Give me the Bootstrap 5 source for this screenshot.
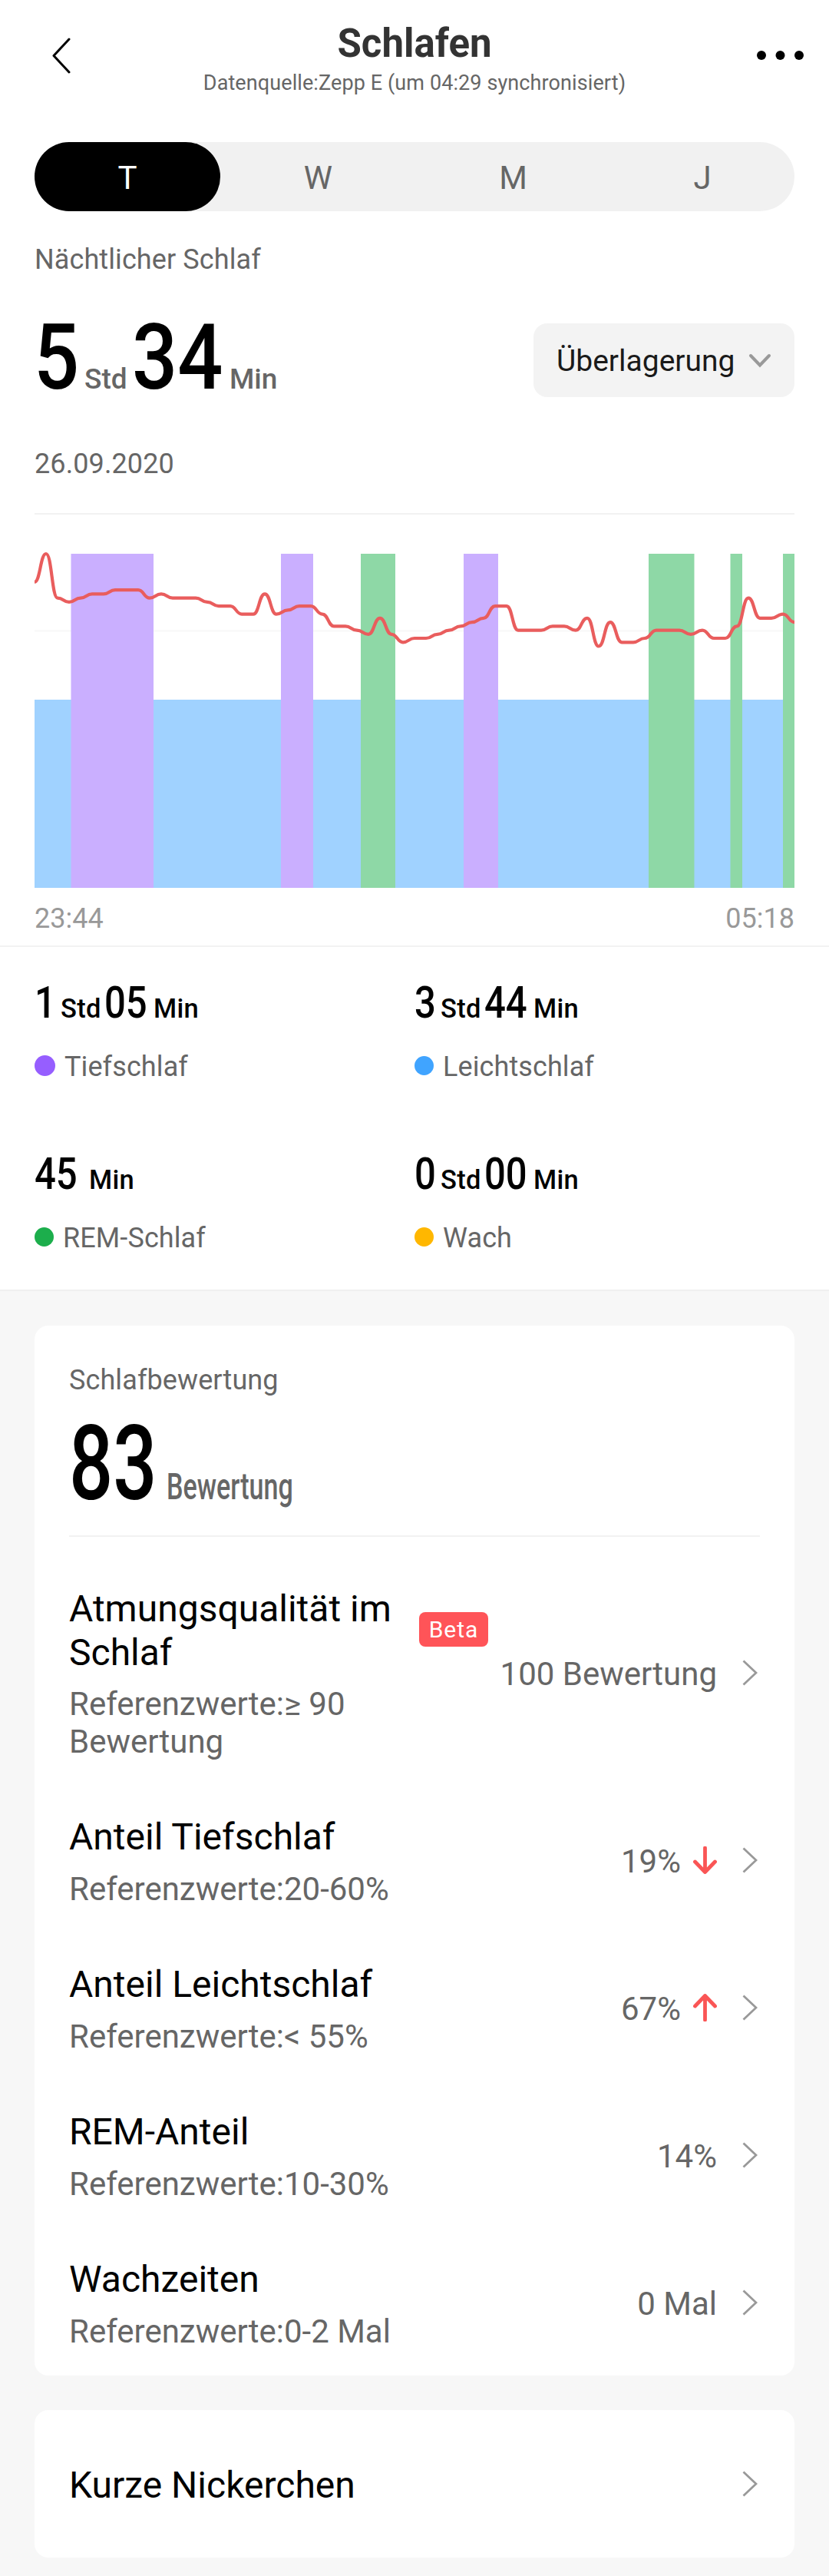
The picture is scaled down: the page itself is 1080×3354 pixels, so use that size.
<!DOCTYPE html>
<html lang="de">
<head>
  <meta charset="UTF-8">
  <meta name="viewport" content="width=device-width, initial-scale=1.0">
  <title>Schlafen</title>
  <link href="https://cdn.jsdelivr.net/npm/bootstrap@5.3.2/dist/css/bootstrap.min.css" rel="stylesheet">
  <style>
    body {
      font-family: Roboto, "Liberation Sans", sans-serif;
      background-color: #f7f7f7;
      color: #000;
      font-size: 36px;
      line-height: 42px;
    }

    svg {
      display: block;
      flex-shrink: 0;
    }

    .grey-text {
      color: #666;
      letter-spacing: .1px;
    }

    .side-pad {
      padding-left: 45px;
      padding-right: 45px;
    }

    /* header */
    .top-bar {
      height: 185px;
      padding: 27px 33px 0;
    }

    .top-bar svg {
      margin-top: 22px;
    }

    .top-title {
      font-size: 51px;
      line-height: 60px;
      font-weight: 700;
      color: #333;
      margin: 0 0 1px;
    }

    .top-source {
      font-size: 27px;
      line-height: 40px;
    }

    /* day / week / month / year */
    .period-tabs {
      display: grid;
      grid-template-columns: 242px 255px 253px 240px;
      height: 90px;
      border-radius: 45px;
      background-color: #f1f1f1;
      font-size: 42px;
      line-height: 90px;
      text-align: center;
    }

    .period-tabs a {
      color: #666;
      text-decoration: none;
      padding-top: 2px;
      height: 90px;
      border-radius: 45px;
    }

    .period-tabs a.current {
      background-color: #000;
      color: #fff;
    }

    /* narrow numerals */
    .narrow {
      display: inline-block;
      white-space: nowrap;
      font-weight: 500;
      transform-origin: left;
      transform: scaleX(.86);
    }

    .night-label {
      margin-top: 42px;
    }

    .night-total {
      margin-top: 62px;
      height: 96px;
    }

    .night-total .narrow {
      font-size: 119px;
      line-height: 90px;
      margin-left: -1px;
      transform: scaleX(.875);
    }

    .night-total .unit {
      font-size: 37px;
      font-weight: 500;
      color: #666;
    }

    .overlay-btn {
      width: 340px;
      height: 96px;
      border: 0;
      border-radius: 18px;
      background-color: #f3f3f3;
      font-size: 39px;
      line-height: 96px;
      color: #1a1a1a;
      padding: 2px 30px 0;
    }

    .night-date {
      margin-top: 66px;
      padding-bottom: 43px;
      border-bottom: 2px solid #f2f2f2;
    }

    .time-axis {
      color: #999;
      margin-top: 15px;
      padding-bottom: 14px;
      border-bottom: 2px solid #f2f2f2;
    }

    /* sleep phases */
    .phases {
      border-bottom: 2px solid #f0f0f0;
    }

    .phase {
      height: 223px;
      padding: 43px 0 0;
    }

    .phase .narrow {
      font-size: 57px;
      line-height: 60px;
    }

    .phase .unit {
      font-size: 34.5px;
      font-weight: 500;
      letter-spacing: .3px;
    }

    .phase-name {
      margin-top: 32px;
      gap: 12px;
    }

    .dot {
      width: 25px;
      height: 25px;
      border-radius: 50%;
      margin-bottom: 4px;
    }

    .dot-deep {
      width: 27px;
      height: 27px;
      background-color: #965eff;
    }

    .dot-light { background-color: #40a4ff; }
    .dot-rem { background-color: #1cae4c; }
    .dot-awake { background-color: #ffb700; }

    /* cards */
    .panel {
      background-color: #fff;
      border-radius: 18px;
      margin: 45px 45px 0;
    }

    .score-head {
      padding-top: 50px;
      margin-bottom: 28px;
      border-bottom: 2px solid #f2f2f2;
    }

    .score-value {
      margin-top: 18px;
      height: 163px;
    }

    .score-value .narrow {
      font-size: 136px;
      line-height: 140px;
      width: 127px;
      transform: scaleX(.74);
    }

    .score-value .score-unit {
      font-size: 48px;
      width: 170px;
      transform: scaleX(.71);
      color: #666;
    }

    .metric {
      min-height: 192px;
      padding: 38px 3px 33px 0;
    }

    .metric-title {
      font-size: 48px;
      line-height: 56.5px;
      max-width: 456px;
    }

    .metric-wrap .metric-title {
      width: 456px;
      flex-shrink: 0;
    }

    .metric-ref {
      margin-top: 14px;
      font-size: 42px;
      line-height: 49.2px;
      color: #666;
      max-width: 440px;
    }

    .metric-value {
      font-size: 42px;
      line-height: 49px;
      color: #666;
      padding-top: 3px;
      white-space: nowrap;
    }

    .metric-end {
      gap: 33px;
      padding-bottom: 4px;
    }

    .beta-tag {
      background-color: #ff5458;
      color: #fff;
      font-size: 30px;
      line-height: 45px;
      width: 90px;
      height: 45px;
      border-radius: 8px;
      text-align: center;
      letter-spacing: 1px;
      margin-bottom: 4px;
    }

    .naps {
      height: 192px;
      padding: 0 48px 0 45px;
    }

    .naps .metric-title {
      padding-top: 4px;
    }
  </style>
</head>
<body>

  <svg class="d-none">
    <symbol id="chevron" viewBox="0 0 20 34">
      <path d="M1.5 1.5 L18 17 L1.5 32.5" fill="none" stroke="#999" stroke-width="2.8"/>
    </symbol>
    <symbol id="arrow" viewBox="0 0 31 36">
      <path d="M15.5 2 V33 M2.500 20 L15.500 33.500 L28.500 20" fill="none" stroke="#fa5555" stroke-width="4.8" stroke-linecap="round" stroke-linejoin="round"/>
    </symbol>
  </svg>

  <main class="bg-white">
    <header class="top-bar d-flex justify-content-between align-items-start">
      <svg width="62" height="48" viewBox="0 0 62 48"><path d="M57 2 L37 23.500 L57 45" fill="none" stroke="#000" stroke-width="3" stroke-linecap="round" stroke-linejoin="round"/></svg>
      <div class="text-center">
        <h1 class="top-title">Schlafen</h1>
        <div class="top-source grey-text">Datenquelle:Zepp E (um 04:29 synchronisiert)</div>
      </div>
      <svg width="62" height="48" viewBox="0 0 62 48"><circle cx="7" cy="23" r="6"/><circle cx="31.500" cy="23" r="6"/><circle cx="56" cy="23" r="6"/></svg>
    </header>

    <div class="side-pad">
      <nav class="period-tabs">
        <a href="#" class="current">T</a>
        <a href="#">W</a>
        <a href="#">M</a>
        <a href="#">J</a>
      </nav>

      <div class="night-label grey-text">Nächtlicher Schlaf</div>

      <div class="night-total d-flex justify-content-between align-items-start">
        <div class="d-flex align-items-baseline">
          <span class="narrow" style="width: 66px">5</span>
          <span class="unit" style="width: 63px">Std</span>
          <span class="narrow" style="width: 127px">34</span>
          <span class="unit">Min</span>
        </div>
        <button class="overlay-btn d-flex justify-content-between align-items-center">
          <span>Überlagerung</span>
          <svg width="30" height="20" viewBox="0 0 30 20"><path d="M3 3 L15 15.500 L27 3" fill="none" stroke="#999" stroke-width="4" stroke-linecap="round"/></svg>
        </button>
      </div>

      <div class="night-date grey-text">26.09.2020</div>

      <svg id="sleepChart" width="990" height="490" viewBox="0 0 990 490">
        <path d="M0 151.500 H990" stroke="#f8f8f8" stroke-width="2"/>
        <rect x="0" y="241" width="990" height="245" fill="#a0d2ff"/>
        <g fill="#caafff">
          <rect x="47.500" y="51" width="107.500" height="435"/>
          <rect x="321" y="51" width="42" height="435"/>
          <rect x="559" y="51" width="45" height="435"/>
        </g>
        <g fill="#8ed8a6">
          <rect x="425" y="51" width="45" height="435"/>
          <rect x="800" y="51" width="59.500" height="435"/>
          <rect x="906.500" y="51" width="15.500" height="435"/>
          <rect x="975" y="51" width="15" height="435"/>
        </g>
        <path id="pulseLine" fill="none" stroke="#e95d5d" stroke-width="4.2"/>
      </svg>
    </div>

    <div class="time-axis side-pad d-flex justify-content-between">
      <span>23:44</span>
      <span>05:18</span>
    </div>

    <section class="phases side-pad">
      <div class="row g-0">
        <div class="col-6 phase">
          <div class="d-flex align-items-baseline">
            <span class="narrow" style="width: 34px">1</span>
            <span class="unit" style="width: 57px">Std</span>
            <span class="narrow" style="width: 64px">05</span>
            <span class="unit">Min</span>
          </div>
          <div class="phase-name d-flex align-items-center grey-text"><span class="dot dot-deep"></span>Tiefschlaf</div>
        </div>
        <div class="col-6 phase">
          <div class="d-flex align-items-baseline">
            <span class="narrow" style="width: 34px">3</span>
            <span class="unit" style="width: 57px">Std</span>
            <span class="narrow" style="width: 64px">44</span>
            <span class="unit">Min</span>
          </div>
          <div class="phase-name d-flex align-items-center grey-text"><span class="dot dot-light"></span>Leichtschlaf</div>
        </div>
        <div class="col-6 phase">
          <div class="d-flex align-items-baseline">
            <span class="narrow" style="width: 71px">45</span>
            <span class="unit">Min</span>
          </div>
          <div class="phase-name d-flex align-items-center grey-text"><span class="dot dot-rem"></span>REM-Schlaf</div>
        </div>
        <div class="col-6 phase">
          <div class="d-flex align-items-baseline">
            <span class="narrow" style="width: 34px">0</span>
            <span class="unit" style="width: 57px">Std</span>
            <span class="narrow" style="width: 64px">00</span>
            <span class="unit">Min</span>
          </div>
          <div class="phase-name d-flex align-items-center grey-text"><span class="dot dot-awake"></span>Wach</div>
        </div>
      </div>
    </section>
  </main>

  <section class="panel side-pad">
    <div class="score-head">
      <div class="grey-text">Schlafbewertung</div>
      <div class="score-value d-flex align-items-baseline">
        <span class="narrow">83</span>
        <span class="narrow score-unit">Bewertung</span>
      </div>
    </div>

    <div class="metric d-flex justify-content-between align-items-center">
      <div>
        <div class="metric-wrap d-flex align-items-center">
          <div class="metric-title">Atmungsqualität im Schlaf</div>
          <span class="beta-tag">Beta</span>
        </div>
        <div class="metric-ref">Referenzwerte:≥ 90 Bewertung</div>
      </div>
      <div class="metric-end d-flex align-items-center">
        <span class="metric-value">100 Bewertung</span>
        <svg width="20" height="34"><use href="#chevron"/></svg>
      </div>
    </div>

    <div class="metric d-flex justify-content-between align-items-center">
      <div>
        <div class="metric-title">Anteil Tiefschlaf</div>
        <div class="metric-ref">Referenzwerte:20-60%</div>
      </div>
      <div class="metric-end d-flex align-items-center">
        <div class="d-flex align-items-center gap-3">
          <span class="metric-value">19%</span>
          <svg width="31" height="36"><use href="#arrow"/></svg>
        </div>
        <svg width="20" height="34"><use href="#chevron"/></svg>
      </div>
    </div>

    <div class="metric d-flex justify-content-between align-items-center">
      <div>
        <div class="metric-title">Anteil Leichtschlaf</div>
        <div class="metric-ref">Referenzwerte:&lt; 55%</div>
      </div>
      <div class="metric-end d-flex align-items-center">
        <div class="d-flex align-items-center gap-3">
          <span class="metric-value">67%</span>
          <svg width="31" height="36"><use href="#arrow" transform="rotate(180 15.5 18)"/></svg>
        </div>
        <svg width="20" height="34"><use href="#chevron"/></svg>
      </div>
    </div>

    <div class="metric d-flex justify-content-between align-items-center">
      <div>
        <div class="metric-title">REM-Anteil</div>
        <div class="metric-ref">Referenzwerte:10-30%</div>
      </div>
      <div class="metric-end d-flex align-items-center">
        <span class="metric-value">14%</span>
        <svg width="20" height="34"><use href="#chevron"/></svg>
      </div>
    </div>

    <div class="metric d-flex justify-content-between align-items-center">
      <div>
        <div class="metric-title">Wachzeiten</div>
        <div class="metric-ref">Referenzwerte:0-2 Mal</div>
      </div>
      <div class="metric-end d-flex align-items-center">
        <span class="metric-value">0 Mal</span>
        <svg width="20" height="34"><use href="#chevron"/></svg>
      </div>
    </div>
  </section>

  <section class="panel naps d-flex justify-content-between align-items-center">
    <div class="metric-title">Kurze Nickerchen</div>
    <svg width="20" height="34"><use href="#chevron"/></svg>
  </section>

  <script src="https://cdn.jsdelivr.net/npm/bootstrap@5.3.2/dist/js/bootstrap.bundle.min.js"></script>

  <script>
    // heart rate, steps below the highest value, one every 15px
    const pulse = [
      7, 0, 11, 12, 11, 10, 10, 9, 9, 9, 11, 10, 11, 11, 11, 12, 13, 13, 15, 15, 10, 15,
      14, 13, 13, 15, 18, 18, 19, 20, 16, 20, 22, 21, 21, 20, 19, 18, 17, 16, 13, 13, 19,
      19, 19, 18, 18, 19, 16, 23, 17, 22, 22, 21, 19, 19, 19, 20, 19, 21, 21, 18, 11, 16,
      16, 15, 17
    ];
    const y = v => (51 + v * 5.24).toFixed(1);

    let d = `M0 ${y(pulse[0])}`;
    for (let i = 1; i < pulse.length; i++) {
      const x = i * 15;
      d += ` C${x - 7.5} ${y(pulse[i - 1])} ${x - 7.5} ${y(pulse[i])} ${x} ${y(pulse[i])}`;
    }
    document.getElementById('pulseLine').setAttribute('d', d);
  </script>

</body>
</html>
